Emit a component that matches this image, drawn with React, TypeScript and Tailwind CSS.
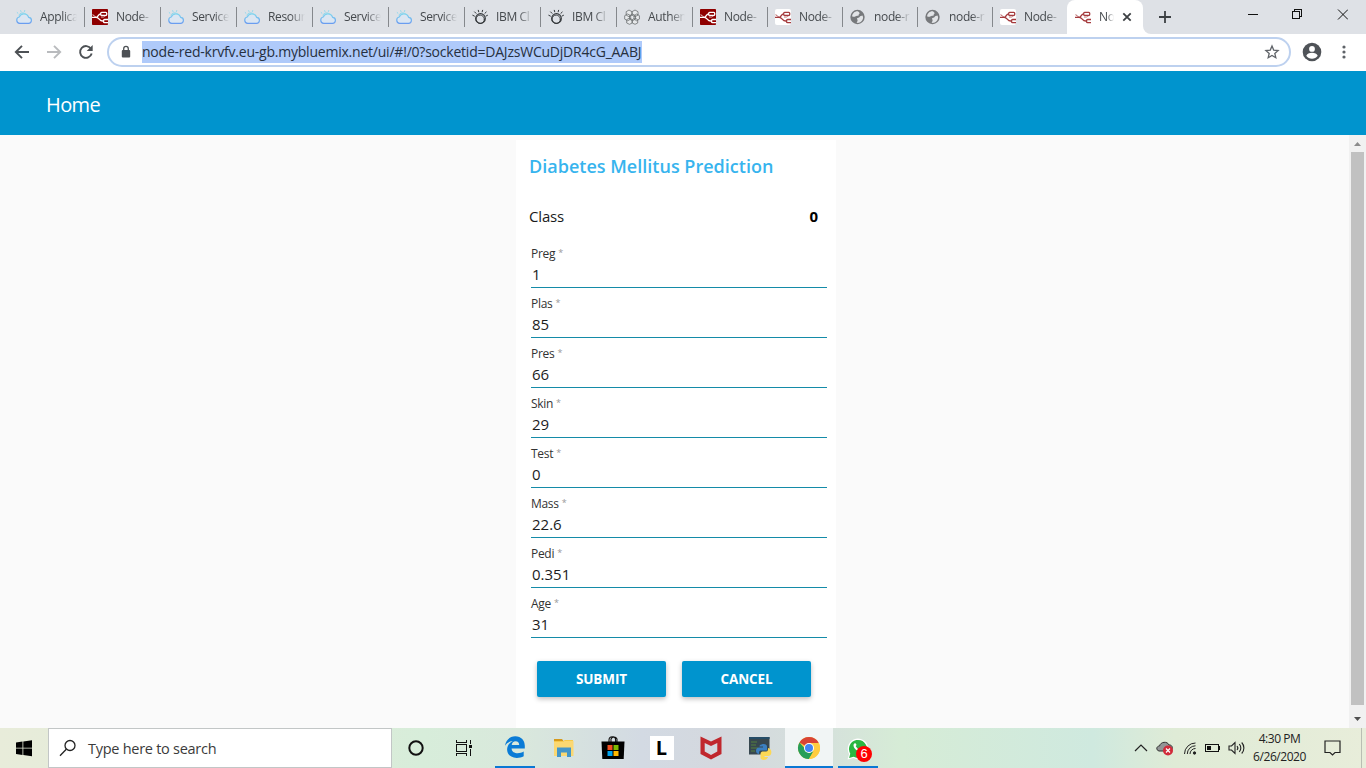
import React from "react";

type IconKind = "cloud" | "nodeRed" | "nodeWhite" | "watson" | "rings" | "globe";

function NodeMark({ stroke }: { stroke: string }) {
  return (
    <g fill="none" stroke={stroke} strokeWidth="1.3">
      <path d="M0 8.300h4.200C6.500 8.300 6 4.800 8.700 4.800M4.200 8.300C7.500 8.300 7 12 10.800 12h1" />
      <path d="M0.500 5.800C2.500 5.800 2.500 8.300 4.500 8.300" strokeWidth="0.900" />
      <path d="M9 8h2.500c1.300 0 .8-1.200 2.200-1.200" strokeWidth="0.700" />
      <rect x="8.700" y="3.300" width="6" height="3" rx="0.900" />
      <path d="M16 10.500h-3.500a.9.900 0 0 0-.9.900v1.300a.9.900 0 0 0 .9.900H16" />
    </g>
  );
}

function Favicon({ kind }: { kind: IconKind }) {
  return (
    <svg width="16" height="16" viewBox="0 0 16 16" className="shrink-0">
      {kind === "cloud" && (
        <g fill="none" strokeWidth="1.2" strokeLinecap="round">
          <defs>
            <linearGradient id="cloudStroke" x1="0" y1="0" x2="0" y2="1">
              <stop offset="0" stopColor="#7fd6ee" />
              <stop offset="1" stopColor="#6a9df0" />
            </linearGradient>
          </defs>
          <path
            d="M3.700 14.300a3.200 3.200 0 0 1-.5-6.300A5 5 0 0 1 12.600 8.300a3 3 0 0 1-.4 6z"
            fill="#dbe6f2"
            stroke="url(#cloudStroke)"
          />
          <path d="M3 6C4 3.600 7.500 3.200 9.500 4.900M1.200 3.600l.7.600M4.700 1.700l.3.800M8.700 1.600l-.2.800" stroke="#8ad8ee" strokeWidth="1" />
        </g>
      )}
      {kind === "nodeRed" && (
        <>
          <rect width="16" height="16" rx="0.800" fill="#8f0000" />
          <NodeMark stroke="#fff" />
        </>
      )}
      {kind === "nodeWhite" && (
        <>
          <rect width="16" height="16" rx="2" fill="#fff" />
          <NodeMark stroke="#a53a3d" />
        </>
      )}
      {kind === "watson" && (
        <g fill="none" stroke="#33373a" strokeLinecap="round">
          <circle cx="8.500" cy="9.500" r="4.800" strokeWidth="1.200" />
          <circle cx="8.200" cy="10.300" r="4.200" strokeWidth="0.900" />
          <path d="M.8 6.300l1.600.8M2.600 2.900l1.400 1.400M6.300 1.300l.4 1.500M10.600 1.300l-.4 1.500M14.200 3.100l-1.300 1.200M15.500 6.300l-1.400.7" />
        </g>
      )}
      {kind === "rings" && (
        <g fill="#eceeef" stroke="#6b6e70" strokeWidth="0.800">
          <path d="M5 1l3 1.700v3.400L5 7.700 2.200 6.100V2.700zM11 1l3 1.700v3.400l-3 1.600-3-1.600V2.700zM3.700 5l3 1.700v3.400l-3 1.700-3-1.700V6.700zM8.500 5l3 1.700v3.400l-3 1.700-3-1.700V6.700zM12.700 5l2.700 1.700v3.400l-2.700 1.700L10 10.100V6.700zM5.500 9l2.700 1.700V14l-2.700 1.300L2.700 14v-3.300zM11 9l2.700 1.700V14L11 15.300 8.200 14v-3.300z" fillOpacity="0.600" />
        </g>
      )}
      {kind === "globe" && (
        <g>
          <circle cx="7.500" cy="8" r="7.200" fill="#77797c" />
          <path d="M7.800 2.300c-2.800-.3-5.400 2-5.700 5 1 .8 2.500.6 3.600 0 .8-.7 1.800-.5 2.700-.6.600-.7-.2-1.300.8-1.800.9-.4.200-1.500-1.400-2.600zM12.500 6.500c-1 .4-2.500.3-2.900 1.500-.5 1-2 .9-2.400 1.300-.7.900.6 1.200.4 2.300-.1 1-.9 1.500-.9 2.200 3.300.600 6.300-1.900 6.400-5.500z" fill="#e2e4e7" />
        </g>
      )}
    </svg>
  );
}

const tabs: { kind: IconKind; title: string }[] = [
  { kind: "cloud", title: "Applica" },
  { kind: "nodeRed", title: "Node-" },
  { kind: "cloud", title: "Service" },
  { kind: "cloud", title: "Resour" },
  { kind: "cloud", title: "Service" },
  { kind: "cloud", title: "Service" },
  { kind: "watson", title: "IBM Cl" },
  { kind: "watson", title: "IBM Cl" },
  { kind: "rings", title: "Authen" },
  { kind: "nodeRed", title: "Node-" },
  { kind: "nodeWhite", title: "Node-" },
  { kind: "globe", title: "node-r" },
  { kind: "globe", title: "node-r" },
  { kind: "nodeWhite", title: "Node-" },
];

function TabStrip() {
  return (
    <div className="flex h-[34px] bg-[#dee1e6] pl-2 text-[12px] text-[#45494d]">
      {tabs.map((t, i) => (
        <div key={i} className={`flex items-center pl-2 ${i < 9 ? "w-[76px]" : "w-[75px]"}`}>
          <Favicon kind={t.kind} />
          <span className="ml-2 w-[37px] whitespace-nowrap tracking-[-0.35px] [mask-image:linear-gradient(to_right,black_60%,transparent)]">
            {t.title}
          </span>
          <span className={`-mr-px ml-auto h-5 w-px ${i === 13 ? "bg-transparent" : "bg-[#85888c]"}`} />
        </div>
      ))}
      <div className="flex w-[76px] items-center rounded-t-lg bg-white pl-2">
        <Favicon kind="nodeWhite" />
        <span className="ml-2 w-[15px] whitespace-nowrap tracking-[-0.3px] [mask-image:linear-gradient(to_right,black_50%,transparent)]">
          No
        </span>
        <svg width="10" height="10" viewBox="0 0 10 10" className="ml-2 shrink-0">
          <path d="M1.300 1.300l7.400 7.400M8.700 1.300L1.300 8.700" stroke="#3c4043" strokeWidth="1.800" />
        </svg>
      </div>
      <div className="flex w-[10px] items-end bg-[linear-gradient(to_bottom,#dee1e6_50%,white_50%)]">
        <div className="h-full w-full rounded-bl-lg bg-[#dee1e6]" />
      </div>
      <svg width="14" height="34" viewBox="0 0 14 34" className="ml-[5px]">
        <path d="M7 11v12M1 17h12" stroke="#3c4043" strokeWidth="1.800" />
      </svg>
      <svg width="100" height="28" viewBox="0 0 100 28" className="mr-[18px] ml-auto" fill="none" stroke="#111" shapeRendering="crispEdges">
        <path d="M0 14.500h10" />
        <path d="M44.500 11.500h7v7h-7zM46.500 11.500v-2h7v7h-2" />
        <path d="M90 9.500l10 10M100 9.500l-10 10" shapeRendering="auto" />
      </svg>
    </div>
  );
}

function AddressRow() {
  return (
    <div className="flex h-[37px] items-center bg-white pb-px text-[#5f6368]">
      <svg width="80" height="16" viewBox="0 0 80 16" className="ml-[14px]" fill="none" strokeWidth="1.900">
        <path d="M15 8H2M8 1.800L1.800 8 8 14.200" stroke="#4d5155" />
        <path d="M33 8h13M40 1.800L46.200 8 40 14.200" stroke="#b9bbbe" />
        <path d="M77 4.800A5.900 5.900 0 1 0 77.700 9.600" stroke="#4d5155" />
        <path d="M78.700 1v6h-6z" fill="#4d5155" />
      </svg>
      <div className="ml-[13px] flex h-[30px] w-[1184px] items-center rounded-full border-2 border-[#bdd1ef] bg-white">
        <svg width="10" height="14" viewBox="0 0 10 14" className="ml-[12px]">
          <rect x="0.800" y="5" width="8.400" height="7.500" rx="1" fill="#4d5155" />
          <path d="M2.700 5.500V3.700a2.300 2.300 0 0 1 4.600 0v1.800" fill="none" stroke="#4d5155" strokeWidth="1.300" />
        </svg>
        <span className="ml-[11px] h-[22px] w-[500px] bg-[#afcafa] text-[14px] leading-[21px] tracking-[-0.22px] whitespace-nowrap text-[#263040]">
          node-red-krvfv.eu-gb.mybluemix.net/ui/#!/0?socketid=DAJzsWCuDjDR4cG_AABJ
        </span>
        <svg width="16" height="16" viewBox="0 0 16 16" className="mr-[9px] ml-auto" fill="none" stroke="#5f6368" strokeWidth="1.300">
          <path d="M8 2l1.700 4.100 4.400.4-3.300 2.900 1 4.300L8 11.400l-3.800 2.300 1-4.300L1.900 6.500l4.400-.4z" />
        </svg>
      </div>
      <svg width="20" height="20" viewBox="0 0 20 20" className="ml-[11px]">
        <circle cx="10" cy="10" r="9.300" fill="#4f5358" />
        <circle cx="10" cy="6.900" r="2.900" fill="#fff" />
        <path d="M4.300 13.700c1-4 10.400-4 11.400 0a6.900 6.900 0 0 1-11.400 0z" fill="#fff" />
      </svg>
      <svg width="4" height="16" viewBox="0 0 4 16" className="ml-[20px]" fill="#5f6368">
        <circle cx="2" cy="3" r="1.600" />
        <circle cx="2" cy="8" r="1.600" />
        <circle cx="2" cy="13" r="1.600" />
      </svg>
    </div>
  );
}

const fields = [
  ["Preg", "1"],
  ["Plas", "85"],
  ["Pres", "66"],
  ["Skin", "29"],
  ["Test", "0"],
  ["Mass", "22.6"],
  ["Pedi", "0.351"],
  ["Age", "31"],
];

function PredictionCard() {
  return (
    <div className="mt-[5px] ml-[516px] w-[320px] bg-white">
      <h1 className="pt-[14px] pl-[13px] text-[18px] leading-6 font-semibold tracking-[0.01px] whitespace-nowrap text-[#37b4ee]">
        Diabetes Mellitus Prediction
      </h1>
      <div className="mt-[26px] flex justify-between pr-[18px] pl-[13px] text-[15px] leading-6 text-[#1a1a1a]">
        <span className="tracking-[-0.15px]">Class</span>
        <span className="font-bold text-black">0</span>
      </div>
      <div className="mt-[10px] pr-[9px] pl-[15px]">
        {fields.map(([label, value]) => (
          <div key={label} className="flex h-[50px] flex-col justify-end">
            <div className="flex text-[12px] leading-[16px] tracking-[-0.3px] text-[#333]">
              {label}
              <span className="ml-[3px] text-[9px] leading-[14px] text-[#999]">*</span>
            </div>
            <div className="pt-px pb-[2px] pl-[1px] text-[15px] leading-[22px] text-[#1c1c1c]">{value}</div>
            <div className="h-px bg-[#148ba8]" />
          </div>
        ))}
      </div>
      <div className="mt-[23px] flex gap-4 pl-[21px]">
        {["SUBMIT", "CANCEL"].map((b) => (
          <button
            key={b}
            className="h-9 w-[129px] rounded-[2px] bg-[#0094ce] text-[13.5px] font-bold tracking-[-0.1px] text-white shadow-[0_2px_5px_rgba(0,0,0,0.26)]"
          >
            {b}
          </button>
        ))}
      </div>
    </div>
  );
}

function AppCell({ children, line, active }: { children: React.ReactNode; line?: boolean; active?: boolean }) {
  return (
    <div className={`flex w-[49px] flex-col items-center pl-px ${active ? "bg-[#f1f5f5] bg-clip-content" : ""}`}>
      <div className="flex h-[38px] items-center">{children}</div>
      {line && <div className={`h-[2px] bg-[#0a78d4] ${active ? "w-full" : "w-10"}`} />}
    </div>
  );
}

function Taskbar() {
  return (
    <div className="flex h-10 bg-[linear-gradient(90deg,#e8ecda_0%,#dcecd9_25%,#d7edda_31%,#d9e8dc_38%,#d3dae3_47%,#d4d8de_53%,#d5e0dc_60%,#d6ecd6_66%,#cfe9df_80%,#dfebd6_86%,#e8edda_100%)]">
      <div className="flex w-12 items-center pl-4">
        <svg width="17" height="17" viewBox="0 0 17 17">
          <path d="M0 2.500l6.500-.9v6.200H0zM7.300 1.500L16 .3v7.500H7.300zM0 8.600h6.500v6.300L0 14zM7.300 8.600H16v7.700l-8.700-1.200z" />
        </svg>
      </div>
      <div className="flex w-[344px] items-center border border-[#c2c6c6] bg-white text-[15px] text-[#3b3b3b]">
        <svg width="18" height="18" viewBox="0 0 18 18" className="ml-[10px]" fill="none" stroke="#222" strokeWidth="1.300">
          <circle cx="11" cy="6.500" r="5" />
          <path d="M7.300 10.300L1 16.700" />
        </svg>
        <span className="ml-[11px] pt-[2px] text-[14.5px] tracking-[-0.27px]">Type here to search</span>
      </div>
      <div className="flex w-12 items-center justify-center">
        <svg width="18" height="18" viewBox="0 0 18 18">
          <circle cx="9" cy="9" r="6.700" fill="none" stroke="#111" strokeWidth="2" />
        </svg>
      </div>
      <div className="flex w-[50px] items-center justify-center pr-1">
        <svg width="17" height="16" viewBox="0 0 17 16" fill="none" stroke="#111" shapeRendering="crispEdges">
          <path d="M1.500 4.500h10v7h-10zM1.500 0v2.500h10V0M1.500 16v-2.500h10V16M15.500 0v4M15.500 9v7" />
          <path d="M14 4.500h3v3h-3z" fill="#111" stroke="none" />
        </svg>
      </div>
      <AppCell line>
        <svg width="22" height="24" viewBox="0 0 22 24">
          <path d="M1 10.800C1.800 5 5.800 1.300 11.300 1.300c6 0 9.500 4.400 9.500 9.500v2.800H7.600c.2 3.400 3.100 4.700 6 4.700 2.400 0 4.400-.7 6.100-1.700v4.600c-1.900 1.200-4.300 1.700-6.900 1.700-6 0-9.700-3.500-9.700-8.400 0-4 2.200-6.700 5.700-8.500C5 6.500 2.700 8 1 10.800zM7.700 9.900h7.500c0-2.300-1.300-3.700-3.600-3.700-2.200 0-3.600 1.500-3.900 3.700z" fill="#0a7bd6" />
        </svg>
      </AppCell>
      <AppCell>
        <svg width="22" height="20" viewBox="0 0 22 20" className="mt-[2px]">
          <path d="M1 1h8l1.500 2H1z" fill="#d69a1c" />
          <path d="M1 3h19.500v15H1z" fill="#fbd872" />
          <path d="M4 9.500h14V19h-4v-4.500H8V19H4z" fill="#4496c9" />
          <path d="M1 3.500h9.500l1-1H20" stroke="#f6c94b" fill="none" />
        </svg>
      </AppCell>
      <AppCell>
        <svg width="24" height="26" viewBox="0 0 24 26" className="mt-[2px]">
          <path d="M8 7V5a3.300 3.300 0 0 1 6.600 0v2M10 7V4a3.300 3.300 0 0 1 6 0v3" fill="none" stroke="#111" strokeWidth="1.100" />
          <path d="M0.500 6.500h23l-.8 17.500h-21.400z" fill="#000" />
          <path d="M6.500 10h5v5h-5z" fill="#f25022" />
          <path d="M12.500 10h5v5h-5z" fill="#7fba00" />
          <path d="M6.500 16h5v5h-5z" fill="#00a4ef" />
          <path d="M12.500 16h5v5h-5z" fill="#ffb900" />
        </svg>
      </AppCell>
      <AppCell>
        <div className="mt-[2px] mr-px flex h-6 w-6 items-center justify-center bg-white pb-px text-[20px] leading-5 font-bold text-black">L</div>
      </AppCell>
      <AppCell>
        <svg width="22" height="24" viewBox="0 0 22 24" className="mt-[2px]">
          <path d="M0.500.5L11 5.500 21.500.5V18L11 23.500.5 18zM4.700 7v8.600L11 19l6.300-3.400V7L11 10z" fill="#c0272d" fillRule="evenodd" />
        </svg>
      </AppCell>
      <AppCell>
        <svg width="24" height="24" viewBox="0 0 24 24" className="mt-[2px]">
          <path d="M1 1h20.500v17.500H1z" fill="#37474f" />
          <path d="M1 1h20.500v2H1z" fill="#254c66" />
          <path d="M3 6h6M3 9h5M3 12h7M3 15h4" stroke="#54803f" />
          <path d="M13.500 8.500c3-1 5.500 0 5.500 2v4h-6c-2 0-2 1.500-2 3.500-4 0-4-6.500 0-6.500h4v-1h-3.500c0-1 .5-1.700 2-2z" fill="#3b7fc0" />
          <path d="M18 23.500c-3 1-5.500 0-5.500-2v-3.500c0-1.500 1-2.500 2-2.500H18c2 0 2-1.500 2-3.500 4.500.500 4.500 8 0 8h-3.500v1H20c0 1-1 1.700-2 2.500z" fill="#fcd855" />
        </svg>
      </AppCell>
      <AppCell active line>
        <svg width="24" height="24" viewBox="0 0 24 24" className="mt-[2px]">
          <circle cx="12" cy="12" r="11" fill="#ffcd40" />
          <path d="M12 12L2.470 6.500A11 11 0 0 1 21.530 6.500L21 7.500H12z" fill="#d94435" />
          <path d="M12 17L2.470 6.500A11 11 0 0 0 12 23L16.500 15z" fill="#279e59" />
          <path d="M12 7h9.800A11 11 0 0 1 12 23l4.800-8z" fill="#ffcd40" />
          <circle cx="12" cy="12" r="5" fill="#fff" />
          <circle cx="12" cy="12" r="4" fill="#4285f4" />
        </svg>
      </AppCell>
      <AppCell line>
        <div className="relative">
          <svg width="22" height="23" viewBox="0 0 21 22" className="mt-[2px]">
            <path d="M.5 21.500l1.500-5.300A9.800 9.800 0 1 1 6 20z" fill="#fff" />
            <path d="M2 20l1.100-4.200A8.600 8.600 0 1 1 6.300 18.900z" fill="#2bb741" />
            <path d="M7 6.300c1-1 1.800 0 2 1 .2.800-1 1-.5 1.700a6 6 0 0 0 3.200 2.700c.8.200 1-1.200 1.700-1 1.500.5 2 1 1.300 1.900-2 3-8.700-1.100-8.500-4.800 0-.6.300-1.100.8-1.500z" fill="#fff" />
          </svg>
          <span className="absolute top-[11px] left-[9px] flex h-4 w-4 items-center justify-center rounded-full bg-[#f00] font-['Liberation_Sans',sans-serif] text-[13px] text-white">6</span>
        </div>
      </AppCell>
      <div className="ml-auto flex items-center text-[12px] text-[#222]">
        <svg width="14" height="10" viewBox="0 0 14 10" fill="none" stroke="#222" strokeWidth="1.200">
          <path d="M1 8l6-6 6 6" />
        </svg>
        <svg width="18" height="16" viewBox="0 0 18 16" className="ml-2">
          <path d="M3 11C-.5 10 .5 6 3.500 6c1-4.500 8-5 9.500-1 4-.5 4.500 5 1 6z" fill="#929596" stroke="#333" />
          <circle cx="12" cy="10.500" r="5" fill="#d12b3a" />
          <path d="M10 8.500l4 4M14 8.500l-4 4" stroke="#fff" strokeWidth="1.200" />
        </svg>
        <svg width="14" height="14" viewBox="0 0 14 14" className="ml-[9px]" fill="none" stroke="#222">
          <path d="M1.500 13A11 11 0 0 1 12.500 2M4.300 13a8.200 8.200 0 0 1 8.200-8.200M7 13a5.500 5.500 0 0 1 5.500-5.500" />
          <circle cx="11.500" cy="12" r="1.200" fill="#222" />
        </svg>
        <svg width="16" height="10" viewBox="0 0 16 10" className="ml-[8px]" fill="none" stroke="#111" shapeRendering="crispEdges">
          <path d="M.5 1.500h13v7H.5zM14.500 3v4" />
          <path d="M2 3h4v4H2z" fill="#111" stroke="none" />
        </svg>
        <svg width="18" height="14" viewBox="0 0 18 14" className="ml-[7px]" fill="none" stroke="#222" strokeWidth="1.100">
          <path d="M1 5h2.500L7 1.500v11L3.500 9H1zM9 5a3 3 0 0 1 0 4M11.300 3.200a5.500 5.500 0 0 1 0 7.600M13.700 1.500a8 8 0 0 1 0 11" />
        </svg>
        <div className="ml-[6px] w-[55px] text-center leading-[18px] tracking-[-0.45px] whitespace-nowrap">
          <div>4:30 PM</div>
          <div>6/26/2020</div>
        </div>
        <svg width="17" height="18" viewBox="0 0 17 18" className="mr-[20px] ml-[17px]" fill="none" stroke="#222" strokeWidth="1.200">
          <path d="M1 2h15v11.500h-5L8.500 16 6 13.500H1z" />
        </svg>
        <span className="mr-1 h-10 w-px bg-[#b9beb3]" />
      </div>
    </div>
  );
}

export default function App() {
  return (
    <div className="flex h-[768px] w-[1366px] flex-col overflow-hidden font-['Open_Sans','Noto_Sans',sans-serif]">
      <TabStrip />
      <AddressRow />
      <header className="flex h-[64px] items-center bg-[#0094ce] pt-[4px] pl-[46px] text-[20px] tracking-[-0.6px] text-white">
        Home
      </header>
      <main className="flex min-h-0 flex-1 justify-between bg-[#fafafa]">
        <div className="flex">
          <PredictionCard />
        </div>
        <div className="flex w-[17px] flex-col items-center bg-[#f1f1f1]">
          <svg width="17" height="17" viewBox="0 0 17 17">
            <path d="M5 11l3.500-4 3.500 4z" fill="#8b8b8b" />
          </svg>
          <div className="w-[13px] flex-1 bg-[#c1c1c1]" />
          <svg width="17" height="23" viewBox="0 0 17 23">
            <path d="M5 12h7l-3.500 4z" fill="#505050" />
          </svg>
        </div>
      </main>
      <Taskbar />
    </div>
  );
}
